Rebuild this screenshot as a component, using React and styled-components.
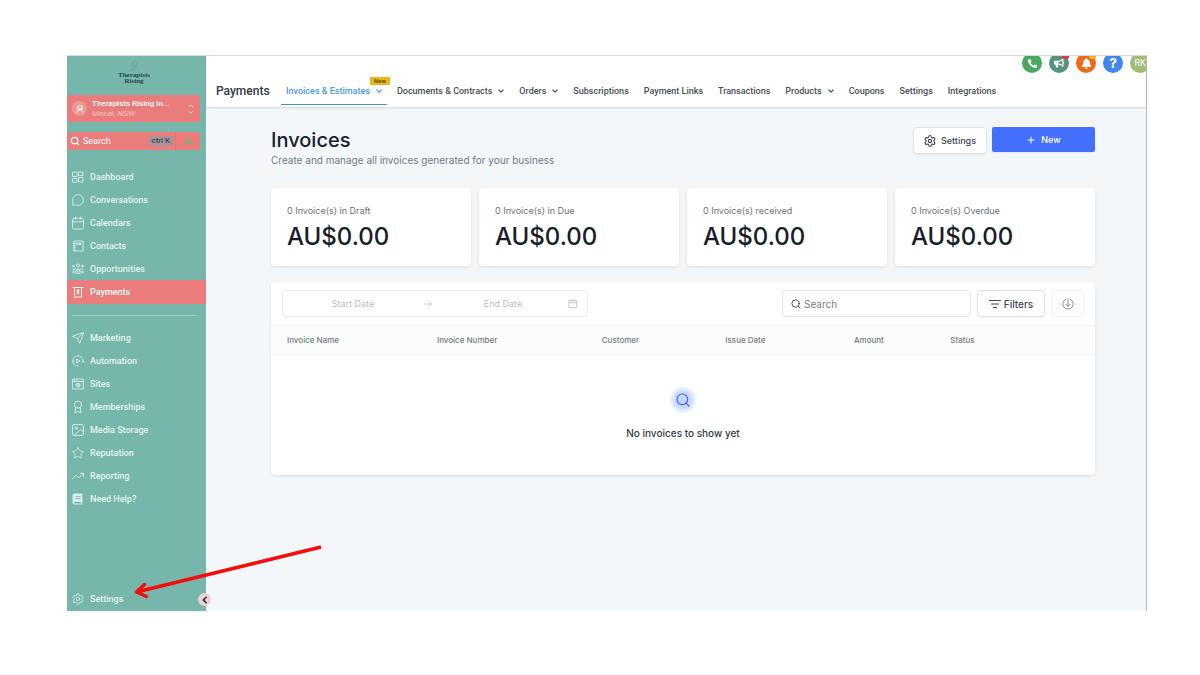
import React from "react";
import styled, { createGlobalStyle, css } from "styled-components";
import {
  MessageCircle, Calendar, Send, Image, Star, TrendingUp,
  Settings as Gear, Search, Plus, ArrowRight, Award,
} from "lucide-react";
import { FaBell, FaBullhorn, FaPhoneAlt, FaQuestion } from "react-icons/fa";

const GlobalStyle = createGlobalStyle`
  *, *::before, *::after { box-sizing: border-box; }
  body { margin: 0; background: #fff; font-family: Inter, "Liberation Sans", sans-serif; color: #1b2130; }
  button, input { font: inherit; color: inherit; margin: 0; }
  button { cursor: pointer; }
  h1, h2, p { margin: 0; font-weight: inherit; }
  svg { display: block; flex: none; overflow: visible; }
`;

const Page = styled.div`
  display: flex;
  min-height: 100vh;
  padding: 55px 53px 64px 67px;
`;

const Frame = styled.div`
  position: relative;
  display: flex;
  flex: 1;
  min-width: 0;
  border-top: 1px solid #d9dcde;
  border-right: 1px solid #b9bdc0;
  background: #f3f7fa;
`;

const Sidebar = styled.aside`
  display: flex;
  flex-direction: column;
  flex: none;
  width: 139px;
  background: #76b6ab;
  font-family: Roboto, sans-serif;
  color: #e4f4f1;
`;

const Brand = styled.div`
  display: flex;
  flex-direction: column;
  align-items: center;
  height: 39px;
  padding-top: 4px;
  padding-right: 5px;
  font-family: "Liberation Serif", serif;
  font-size: 7px;
  line-height: 6px;
  font-weight: 700;
  text-align: center;
  color: #24494a;
`;

const Account = styled.button`
  display: flex;
  align-items: center;
  gap: 5px;
  height: 27px;
  margin-right: 6px;
  padding: 0 6px 0 5px;
  border: 0;
  border-radius: 3px;
  background: #ea7c7b;
  text-align: left;
  color: #fff;
`;

const AccountBadge = styled.span`
  display: grid;
  place-items: center;
  flex: none;
  width: 15px;
  height: 15px;
  border-radius: 50%;
  background: #ef9795;
`;

const AccountText = styled.span`
  flex: 1;
  font-size: 8px;
  line-height: 10px;
  font-weight: 500;
  white-space: nowrap;
`;

const AccountPlace = styled.span`
  display: block;
  font-weight: 400;
  color: #f9c4c1;
`;

const SideSearch = styled.div`
  display: flex;
  align-items: center;
  height: 18px;
  margin: 10px 6px 15px 0;
  border-radius: 2px;
  background: #ea7c7b;
  font-size: 9px;
  color: #fff;
`;

const SideSearchLabel = styled.label`
  display: flex;
  flex: 1;
  align-items: center;
  gap: 4px;
  min-width: 0;
  padding-left: 4px;
`;

const SideSearchInput = styled.input`
  flex: 1;
  min-width: 0;
  width: 0;
  padding: 0;
  border: 0;
  outline: 0;
  background: none;
  &::placeholder { color: #fff; opacity: 1; }
`;

const Shortcut = styled.kbd`
  padding: 0 3px;
  border-radius: 1px;
  background: #a8929d;
  font-family: inherit;
  font-size: 8px;
  line-height: 10px;
  color: #22303d;
`;

const QuickAction = styled.button`
  display: grid;
  place-items: center;
  width: 25px;
  height: 18px;
  margin-left: 2px;
  padding: 0;
  border: 0;
  border-left: 1px solid #e2776f;
  background: none;
`;

const QuickDot = styled.span`
  width: 5px;
  height: 5px;
  border-radius: 50%;
  background: #6fb872;
`;

const NavGroup = styled.nav`
  display: flex;
  flex-direction: column;
`;

const NavLink = styled.a`
  display: flex;
  align-items: center;
  gap: 6px;
  height: 23px;
  padding-left: 5px;
  font-size: 9px;
  font-weight: 500;
  text-decoration: none;
  color: inherit;
  svg { opacity: 0.9; }
  ${(p) => p.$active && css`
    height: 24px;
    background: #ea7c7b;
    color: #fff;
  `}
`;

const Rule = styled.hr`
  width: 125px;
  height: 1px;
  margin: 11px 0 10px 5px;
  border: 0;
  background: #9fcdc5;
`;

const SideFooter = styled.div`
  margin-top: auto;
  padding-bottom: 1px;
`;

const Collapse = styled.button`
  position: absolute;
  left: 131px;
  bottom: 5px;
  display: grid;
  place-items: center;
  width: 13px;
  height: 13px;
  padding: 0;
  border: 0;
  border-radius: 50%;
  background: #ecd2d8;
  color: #2c2f33;
`;

const Main = styled.div`
  display: flex;
  flex-direction: column;
  flex: 1;
  min-width: 0;
`;

const Header = styled.header`
  height: 51px;
  background: #fff;
  box-shadow: 0 1px 2px rgba(40, 60, 70, 0.18);
  font-family: Roboto, sans-serif;
`;

const Actions = styled.div`
  display: flex;
  justify-content: flex-end;
  align-items: flex-end;
  gap: 7px;
  height: 17px;
  overflow: hidden;
`;

const RoundButton = styled.button`
  position: relative;
  display: grid;
  place-items: center;
  flex: none;
  width: 20px;
  height: 20px;
  padding: 0;
  border: 0;
  border-radius: 50%;
  background: ${(p) => p.$color};
  font-size: 9px;
  color: #fff;
  &:last-child { margin-right: -4px; }
`;

const Dot = styled.span`
  position: absolute;
  top: 0;
  right: 0;
  width: 7px;
  height: 6px;
  border-radius: 2px;
  background: ${(p) => p.$color};
`;

const TabRow = styled.div`
  display: flex;
  align-items: flex-end;
  height: 32px;
  padding-left: 10px;
`;

const AreaName = styled.h2`
  width: 65px;
  font-size: 12px;
  line-height: 28px;
  font-weight: 500;
  color: #33383f;
`;

const Tabs = styled.nav`
  display: flex;
  gap: 5px;
`;

const Tab = styled.a`
  position: relative;
  display: flex;
  align-items: center;
  gap: 6px;
  height: 28px;
  padding: 0 5px;
  border-bottom: 1px solid ${(p) => (p.$active ? "#4a8fd0" : "transparent")};
  font-size: 9px;
  font-weight: 500;
  white-space: nowrap;
  text-decoration: none;
  color: ${(p) => (p.$active ? "#4f9ae0" : "#494f57")};
`;

const NewTag = styled.span`
  position: absolute;
  top: 0;
  right: -3px;
  padding: 0 4px;
  border-radius: 1px;
  background: #eab41c;
  font-size: 6px;
  line-height: 8px;
  font-weight: 500;
  color: #5b4614;
`;

const Content = styled.main`
  padding: 20px 51px 0 65px;
`;

const TitleBar = styled.div`
  display: flex;
  align-items: flex-start;
  gap: 5px;
  height: 61px;
`;

const Heading = styled.div`
  flex: 1;
`;

const Title = styled.h1`
  font-size: 20px;
  line-height: 26px;
  font-weight: 500;
`;

const Subtitle = styled.p`
  font-size: 10px;
  line-height: 14px;
  color: #737983;
`;

const Button = styled.button`
  display: flex;
  align-items: center;
  justify-content: center;
  gap: ${(p) => (p.$compact ? 3 : 5)}px;
  width: ${(p) => p.$width}px;
  height: 27px;
  padding: 0;
  border: 1px solid #dfe3e8;
  border-radius: 4px;
  background: #fff;
  box-shadow: 0 1px 2px rgba(16, 24, 40, 0.06);
  font-size: ${(p) => (p.$compact ? 10 : 9)}px;
  font-weight: 500;
  color: #3d4450;
  ${(p) => p.$primary && css`
    height: 25px;
    border: 0;
    border-radius: 2px;
    background: #4470fd;
    color: #fff;
  `}
`;

const Cards = styled.div`
  display: grid;
  grid-template-columns: repeat(4, 1fr);
  gap: 8px;
`;

const Card = styled.section`
  height: 78px;
  padding: 15px 16px;
  border-radius: 4px;
  background: #fff;
  box-shadow: 0 1px 3px rgba(30, 50, 70, 0.12);
`;

const CardLabel = styled.p`
  font-size: 9px;
  line-height: 16px;
  color: #6c727e;
`;

const CardValue = styled.p`
  font-size: 24px;
  line-height: 36px;
  font-weight: 500;
  color: #181d2b;
`;

const Panel = styled.section`
  margin-top: 16px;
  border-radius: 4px;
  background: #fff;
  box-shadow: 0 1px 3px rgba(30, 50, 70, 0.12);
  overflow: hidden;
`;

const Toolbar = styled.div`
  display: flex;
  align-items: center;
  gap: 6px;
  height: 43px;
  padding: 0 11px;
`;

const DateRange = styled.div`
  display: flex;
  align-items: center;
  width: 306px;
  height: 27px;
  margin-right: auto;
  padding: 0 9px 0 5px;
  border: 1px solid #e8eaed;
  border-radius: 4px;
  color: #bcc0c6;
`;

const DateArrow = styled(ArrowRight)`
  margin: 0 4px;
`;

const DateInput = styled.input`
  flex: 1;
  min-width: 0;
  padding: 0;
  border: 0;
  outline: 0;
  background: none;
  font-size: 9px;
  text-align: center;
  &::placeholder { color: #bcbec2; opacity: 1; }
`;

const SearchField = styled.label`
  display: flex;
  align-items: center;
  gap: 3px;
  width: 189px;
  height: 27px;
  padding: 0 8px;
  border: 1px solid #e3e6ea;
  border-radius: 4px;
  color: #4b515b;
`;

const SearchInput = styled.input`
  flex: 1;
  min-width: 0;
  padding: 0;
  border: 0;
  outline: 0;
  background: none;
  font-size: 10px;
  &::placeholder { color: #7b818b; opacity: 1; }
`;

const DownloadButton = styled(Button)`
  border-color: #eff1f3;
  box-shadow: none;
  color: #7d838d;
`;

const Table = styled.table`
  width: 100%;
  border-collapse: collapse;
  table-layout: fixed;
`;

const HeadCell = styled.th`
  width: ${(p) => p.$share}%;
  height: 29px;
  padding: 0 0 0 16px;
  border-top: 1px solid #f3f5f7;
  border-bottom: 1px solid #f6f7f9;
  background: #f9fbfc;
  font-size: 8px;
  font-weight: 500;
  text-align: left;
  color: #757b85;
`;

const EmptyCell = styled.td`
  height: 120px;
  padding: 0;
  vertical-align: top;
`;

const Empty = styled.div`
  display: flex;
  flex-direction: column;
  align-items: center;
  gap: 11px;
  padding-top: 31px;
  font-size: 10px;
  line-height: 16px;
  font-weight: 500;
  color: #333945;
`;

const Halo = styled.span`
  display: grid;
  place-items: center;
  width: 28px;
  height: 28px;
  border-radius: 50%;
  background: radial-gradient(circle closest-side, #c5d5fd 0 50%, #dde7fe 72%, #eef3ff 88%, #f9fbff 100%);
  color: #4b68ee;
`;

const Arrow = styled.svg`
  position: absolute;
  left: 64px;
  bottom: 9px;
  pointer-events: none;
`;

const Icon = ({ size = 12, sw = 1.8, children }) => (
  <svg width={size} height={size} viewBox="0 0 24 24" fill="none" stroke="currentColor"
    strokeWidth={sw} strokeLinecap="round" strokeLinejoin="round" aria-hidden="true">
    {children}
  </svg>
);

const Chevron = () => (
  <svg width="6" height="4" viewBox="0 0 6 4" fill="none" stroke="currentColor" strokeWidth="1.3" aria-hidden="true">
    <path d="M.5.6 3 3.1 5.5.6" />
  </svg>
);

const DashboardIcon = () => (
  <Icon><path d="M2 2h8v9H2zM14 2h8v7h-8zM2 15h8v7H2zM14 13h8v9h-8z" /></Icon>
);

const ContactsIcon = () => (
  <Icon>
    <path d="M5 2h17v20H5zM2 6h5M2 11h5M2 16h5M2 21h5" />
    <path d="M10 6h3v3h-3zM15 6h3v3h-3z" />
  </Icon>
);

const OpportunitiesIcon = () => (
  <Icon sw={2}>
    <circle cx="12" cy="5" r="3" />
    <path d="M8 21v-5a4 4 0 0 1 8 0v5zM12 15v4" />
    <circle cx="3" cy="6" r="1.6" /><circle cx="21" cy="6" r="1.6" />
    <circle cx="3" cy="18" r="1.6" /><circle cx="21" cy="18" r="1.6" />
    <path d="M2 12h5M17 12h5" />
  </Icon>
);

const PaymentsIcon = () => (
  <Icon sw={2}>
    <path d="M2 3h20M5 3v19h14V3" />
    <path d="M14.5 8.500h-3.500a1.500 1.500 0 0 0 0 3h2a1.500 1.500 0 0 1 0 3H9.500M12 7v9" />
  </Icon>
);

const AutomationIcon = () => (
  <Icon>
    <path d="M5 20a10.500 10.500 0 1 1 17.500-8M1.500 12H4M20 14l2.500-2 1 2.500M9 21.500l2 .5" />
    <path d="m10 8.500 6 3.500-6 3.500z" />
  </Icon>
);

const SitesIcon = () => (
  <Icon>
    <path d="M1.500 2h21v20h-21zM1.500 7h21M4.500 4.500h1M8 4.500h1" />
    <circle cx="12" cy="14.500" r="4" /><circle cx="12" cy="14.500" r="1.300" />
  </Icon>
);

const HelpIcon = () => (
  <svg width="12" height="12" viewBox="0 0 24 24" fill="currentColor" aria-hidden="true">
    <path fillRule="evenodd" d="M5 1h14a2 2 0 0 1 2 2v13.500a1.500 1.500 0 0 1-1 1.400v3.100h1V23H5a4 4 0 0 1-4-4V5a4 4 0 0 1 4-4zm.5 17a1.500 1.500 0 0 0 0 3H18v-3zM7 6v1.500h10V6zm0 4v1.500h10V10z" />
  </svg>
);

const UpDown = () => (
  <svg width="6" height="10" viewBox="0 0 6 10" fill="none" stroke="#fbdcda" strokeWidth="1" aria-hidden="true">
    <path d="M.8 3 3 .9 5.200 3M.8 7 3 9.100 5.200 7" />
  </svg>
);

const FilterIcon = () => (
  <Icon size={12} sw={2.2}><path d="M1 5h22M5 12h14M9 19h6" /></Icon>
);

const DownloadIcon = () => (
  <Icon size={12} sw={1.8}>
    <path d="M8 2a10.500 10.500 0 1 0 8 0" />
    <path d="M12 2v14M8 12.500l4 4 4-4" />
  </Icon>
);

const BrandMark = () => (
  <svg width="12" height="12" viewBox="0 0 24 24" fill="none" stroke="#5c9d93" strokeWidth="1" aria-hidden="true">
    <circle cx="13" cy="8" r="5" />
    <path d="M4 22c4-3 5-6 8-9s6 3 2 5-6 2-8 5M8 3c3 4 8 6 10 14" />
  </svg>
);

const line = { size: 12, strokeWidth: 1.6, viewBox: "1 1 22 22", "aria-hidden": true };

const primaryNav = [
  ["Dashboard", <DashboardIcon />],
  ["Conversations", <MessageCircle {...line} />],
  ["Calendars", <Calendar {...line} viewBox="2 2 20 20" />],
  ["Contacts", <ContactsIcon />],
  ["Opportunities", <OpportunitiesIcon />],
  ["Payments", <PaymentsIcon />],
];

const secondaryNav = [
  ["Marketing", <Send {...line} />],
  ["Automation", <AutomationIcon />],
  ["Sites", <SitesIcon />],
  ["Memberships", <Award {...line} viewBox="2 2 20 20" />],
  ["Media Storage", <Image {...line} viewBox="2 2 20 20" />],
  ["Reputation", <Star {...line} />],
  ["Reporting", <TrendingUp {...line} />],
  ["Need Help?", <HelpIcon />],
];

const tabs = [
  { label: "Invoices & Estimates", menu: true, active: true, tag: "New" },
  { label: "Documents & Contracts", menu: true },
  { label: "Orders", menu: true },
  { label: "Subscriptions" },
  { label: "Payment Links" },
  { label: "Transactions" },
  { label: "Products", menu: true },
  { label: "Coupons" },
  { label: "Settings" },
  { label: "Integrations" },
];

const totals = ["0 Invoice(s) in Draft", "0 Invoice(s) in Due", "0 Invoice(s) received", "0 Invoice(s) Overdue"];

const columns = [
  ["Invoice Name", 18.2],
  ["Invoice Number", 20],
  ["Customer", 15],
  ["Issue Date", 15.6],
  ["Amount", 11.7],
  ["Status", 19.5],
];

const NavItems = ({ items, active, label }) => (
  <NavGroup aria-label={label}>
    {items.map(([text, icon]) => (
      <NavLink key={text} href="#" $active={text === active}>{icon}{text}</NavLink>
    ))}
  </NavGroup>
);

export default function App() {
  return (
    <Page>
      <GlobalStyle />
      <Frame>
        <Sidebar>
          <Brand><BrandMark /><span>Therapists<br />Rising</span></Brand>
          <Account type="button">
            <AccountBadge>
              <Icon size={10} sw={2}>
                <circle cx="12" cy="9" r="6" /><path d="M4 20c2-5 5-6 8-6s6 1 8 6M8 9l4 3 4-3" />
              </Icon>
            </AccountBadge>
            <AccountText>Therapists Rising In...<AccountPlace>Menai, NSW</AccountPlace></AccountText>
            <UpDown />
          </Account>
          <SideSearch>
            <SideSearchLabel>
              <Search size={8} viewBox="2 2 20 20" strokeWidth={3} aria-hidden="true" />
              <SideSearchInput type="search" placeholder="Search" aria-label="Search" />
              <Shortcut>ctrl K</Shortcut>
            </SideSearchLabel>
            <QuickAction type="button" aria-label="Quick actions"><QuickDot /></QuickAction>
          </SideSearch>
          <NavItems items={primaryNav} active="Payments" label="Main" />
          <Rule />
          <NavItems items={secondaryNav} label="More" />
          <SideFooter>
            <NavLink href="#"><Gear {...line} />Settings</NavLink>
          </SideFooter>
        </Sidebar>

        <Main>
          <Header>
            <Actions>
              <RoundButton type="button" aria-label="Call" $color="#48a95f"><FaPhoneAlt size={9} /></RoundButton>
              <RoundButton type="button" aria-label="Announcements" $color="#57937f"><FaBullhorn size={10} /><Dot $color="#e0383a" /></RoundButton>
              <RoundButton type="button" aria-label="Notifications" $color="#ee6b1c"><FaBell size={11} /><Dot $color="#f5b21f" /></RoundButton>
              <RoundButton type="button" aria-label="Help" $color="#4088f0"><FaQuestion size={10} /></RoundButton>
              <RoundButton type="button" $color="#9fbd74">RK</RoundButton>
            </Actions>
            <TabRow>
              <AreaName>Payments</AreaName>
              <Tabs aria-label="Payments">
                {tabs.map((t) => (
                  <Tab key={t.label} href="#" $active={t.active}>
                    {t.label}
                    {t.menu && <Chevron />}
                    {t.tag && <NewTag>{t.tag}</NewTag>}
                  </Tab>
                ))}
              </Tabs>
            </TabRow>
          </Header>

          <Content>
            <TitleBar>
              <Heading>
                <Title>Invoices</Title>
                <Subtitle>Create and manage all invoices generated for your business</Subtitle>
              </Heading>
              <Button type="button" $width={74}><Gear size={12} viewBox="1 1 22 22" strokeWidth={2} aria-hidden="true" />Settings</Button>
              <Button type="button" $width={103} $primary><Plus size={10} strokeWidth={2.5} aria-hidden="true" />New</Button>
            </TitleBar>

            <Cards>
              {totals.map((label) => (
                <Card key={label}>
                  <CardLabel>{label}</CardLabel>
                  <CardValue>AU$0.00</CardValue>
                </Card>
              ))}
            </Cards>

            <Panel>
              <Toolbar>
                <DateRange>
                  <DateInput type="text" placeholder="Start Date" aria-label="Start date" />
                  <DateArrow size={12} strokeWidth={1.5} aria-hidden="true" />
                  <DateInput type="text" placeholder="End Date" aria-label="End date" />
                  <Icon size={10} sw={2}><path d="M3 4h18v17H3zM3 9h18M8 2v3M16 2v3" /></Icon>
                </DateRange>
                <SearchField>
                  <Search size={10} viewBox="1 1 22 22" strokeWidth={2.2} aria-hidden="true" />
                  <SearchInput type="search" placeholder="Search" aria-label="Search invoices" />
                </SearchField>
                <Button type="button" $width={68} $compact><FilterIcon />Filters</Button>
                <DownloadButton type="button" $width={33} aria-label="Download"><DownloadIcon /></DownloadButton>
              </Toolbar>
              <Table>
                <thead>
                  <tr>
                    {columns.map(([name, share]) => <HeadCell key={name} scope="col" $share={share}>{name}</HeadCell>)}
                  </tr>
                </thead>
                <tbody>
                  <tr>
                    <EmptyCell colSpan={6}>
                      <Empty>
                        <Halo><Search size={16} strokeWidth={1.8} aria-hidden="true" /></Halo>
                        <p>No invoices to show yet</p>
                      </Empty>
                    </EmptyCell>
                  </tr>
                </tbody>
              </Table>
            </Panel>
          </Content>
        </Main>

        <Collapse type="button" aria-label="Collapse sidebar">
          <svg width="6" height="8" viewBox="0 0 6 8" fill="none" stroke="currentColor" strokeWidth="1.6" aria-hidden="true">
            <path d="M4.600.8 1.400 4l3.200 3.200" />
          </svg>
        </Collapse>
        <Arrow width="194" height="58" viewBox="131 544 194 58" fill="none" stroke="#f50d0d" strokeWidth="3.500" aria-hidden="true">
          <path d="M321 547 136.500 592" />
          <path d="M144.500 584.500 136.500 592l10 4.500" strokeLinecap="round" strokeLinejoin="round" />
        </Arrow>
      </Frame>
    </Page>
  );
}
